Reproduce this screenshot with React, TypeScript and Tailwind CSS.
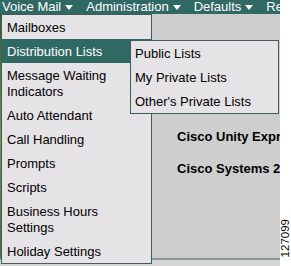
import React from "react";

const mainItems: string[][] = [
  ["Mailboxes"],
  ["Distribution Lists"],
  ["Message Waiting", "Indicators"],
  ["Auto Attendant"],
  ["Call Handling"],
  ["Prompts"],
  ["Scripts"],
  ["Business Hours", "Settings"],
  ["Holiday Settings"],
];

const subItems = ["Public Lists", "My Private Lists", "Other's Private Lists"];

const Caret = () => (
  <svg width="8" height="5" viewBox="0 0 8 5" className="ml-[4px] mt-[1px]">
    <polygon points="0,0 8,0 4,5" fill="#ffffff" />
  </svg>
);

export default function App() {
  const navItems = ["Voice Mail", "Administration", "Defaults"];

  return (
    <div className="relative flex h-[266px] w-[291px] overflow-hidden bg-white font-['Liberation_Sans',Arial,sans-serif] text-[13px] text-black">
      {/* main page */}
      <div className="flex w-[280px] shrink-0 flex-col overflow-hidden">
        {/* top nav bar */}
        <div className="flex h-[14px] items-center gap-[13px] overflow-hidden whitespace-nowrap bg-[#306864] pl-[2px] leading-[14px] text-white">
          {navItems.map((n) => (
            <div key={n} className="flex shrink-0 items-center">
              <span>{n}</span>
              <Caret />
            </div>
          ))}
          <span className="shrink-0">Re</span>
        </div>

        {/* content */}
        <div className="flex flex-1 flex-col bg-[#cecece]">
          <div className="flex flex-1 overflow-hidden">
            <div className="w-[152px] shrink-0 bg-gradient-to-b from-[#3d5a2e] via-[#6f9a4a] to-[#4b6b34]" />
            <div className="flex flex-col gap-[16px] pl-[25px] pt-[115px] font-bold leading-[16px] whitespace-nowrap">
              <div>Cisco Unity Express</div>
              <div>Cisco Systems 2005</div>
            </div>
          </div>
          <div className="h-[8px] border-t-2 border-[#8a9896] bg-[#d6d6d6]" />
        </div>
      </div>

      {/* right margin with figure number */}
      <div className="flex w-[11px] flex-col justify-end pb-[9px]">
        <span className="rotate-180 text-[11.5px] leading-[10px] [writing-mode:vertical-rl]">127099</span>
      </div>

      {/* Voice Mail dropdown */}
      <div className="absolute left-[1px] top-[14px] w-[151px] border border-[#3e5e5b] bg-[#e6e3e6]">
        {mainItems.map((lines, i) => (
          <div
            key={i}
            className={
              "pb-[3px] pl-[5px] pt-[5px] leading-[16px] " +
              (i === 1 ? "bg-[#306864] text-white" : "")
            }
          >
            {lines.map((l) => (
              <div key={l}>{l}</div>
            ))}
          </div>
        ))}
      </div>

      {/* Distribution Lists submenu */}
      <div className="absolute left-[130px] top-[40px] w-[149px] border border-[#3e5e5b] bg-[#e6e3e6]">
        {subItems.map((s) => (
          <div key={s} className="pb-[3px] pl-[4px] pt-[5px] leading-[16px]">
            {s}
          </div>
        ))}
      </div>
    </div>
  );
}
